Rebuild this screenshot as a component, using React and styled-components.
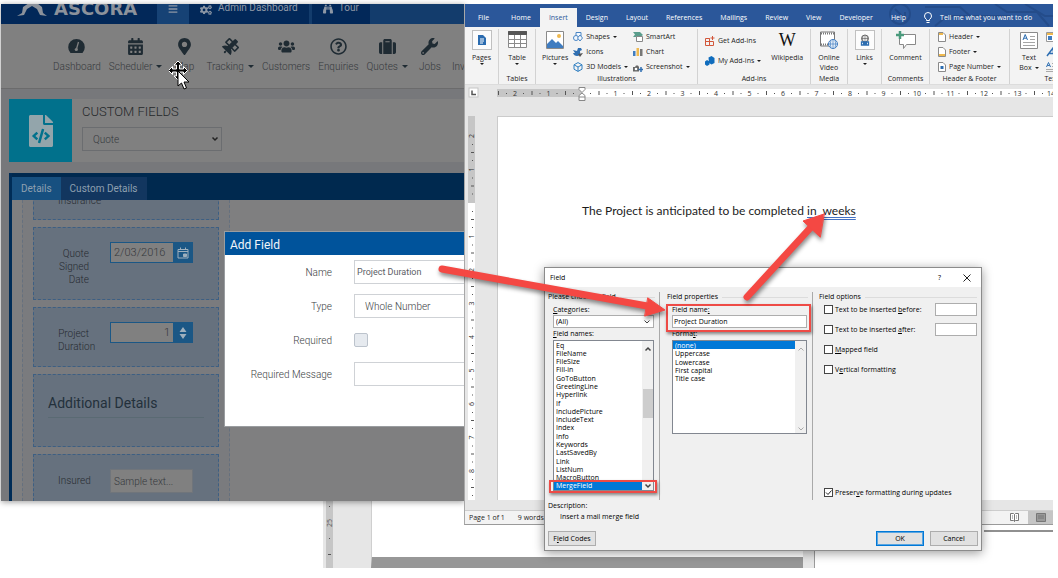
import React from "react";
import styled, { createGlobalStyle } from "styled-components";
import {
  FaCalendarAlt,
  FaMapMarkerAlt,
  FaSatellite,
  FaUsers,
  FaRegQuestionCircle,
  FaSuitcase,
  FaWrench,
  FaFileCode,
  FaCogs,
  FaBinoculars,
  FaBars,
} from "react-icons/fa";

const GlobalStyle = createGlobalStyle`
  * {
    box-sizing: border-box;
  }
  body {
    margin: 0;
    background: #fff;
  }
  button, input, select {
    font: inherit;
    color: inherit;
    margin: 0;
    padding: 0;
    border: none;
    border-radius: 0;
    background: none;
  }
  svg {
    display: block;
    flex: none;
  }
`;

const Desktop = styled.main`
  position: relative;
  min-height: 568px;
  overflow: hidden;
`;

const Caret = styled.span`
  width: 0;
  height: 0;
  border: ${(p) => p.$size || 2}px solid transparent;
  border-top-color: currentColor;
  border-bottom: none;
`;

/* ---------- Ascora window ---------- */

const AscoraWindow = styled.section`
  position: absolute;
  left: 1px;
  top: 4px;
  width: 464px;
  height: 497px;
  overflow: hidden;
  display: flex;
  flex-direction: column;
  background: #77787b;
  box-shadow: 0 1px 6px rgba(0, 0, 0, 0.4);
  font: 300 10px/13px Roboto, sans-serif;
  color: #36393d;
`;

const TopBar = styled.header`
  display: flex;
  height: 20px;
  flex: none;
  background: #133c6c;
  color: #8d97a5;
`;

const Brand = styled.div`
  display: flex;
  align-items: flex-end;
  gap: 6px;
  width: 156px;
  padding: 0 0 7px 15px;
  background: #022859;
  color: #8c929b;
  font: bold 18px/16px "DejaVu Sans", sans-serif;
`;

const TopTab = styled.button`
  display: flex;
  align-items: flex-start;
  gap: 6px;
  padding: 0 11px;
  margin-right: ${(p) => (p.$light ? 0 : 3)}px;
  background: ${(p) => (p.$light ? "#164275" : "#022859")};
  font-weight: 400;
  line-height: 8px;
`;

const NavBar = styled.nav`
  display: flex;
  height: 65px;
  flex: none;
  padding: 14px 0 0 48px;
  background: #808080;
  border-bottom: 1px solid #6b6b6c;
  overflow: hidden;
`;

const NavItem = styled.button`
  display: flex;
  flex-direction: column;
  align-items: center;
  gap: 5px;
  flex: none;
  min-width: 36px;
  height: 40px;
  padding: 0 4px;
  color: #1f2b33;
  span {
    display: flex;
    align-items: center;
    gap: 4px;
    color: #36393d;
  }
  i {
    color: #1f2b33;
  }
`;

const PageHead = styled.div`
  display: flex;
  flex: none;
  height: 63px;
  margin: 10px 0 11px 8px;
  background: #808080;
`;

const Tile = styled.div`
  display: flex;
  align-items: center;
  justify-content: center;
  width: 63px;
  background: #01718c;
  color: #93a5ab;
`;

const PageTitle = styled.div`
  padding: 5px 10px;
  h1 {
    margin: 0 0 7px;
    font: 300 13px/16px Roboto, sans-serif;
    color: #25282b;
  }
`;

const SelectBox = styled.div`
  position: relative;
  width: ${(p) => p.$width};
  select {
    appearance: none;
    display: block;
    width: 100%;
    height: ${(p) => p.$height}px;
    padding-left: ${(p) => p.$indent}px;
    border: 1px solid ${(p) => p.$border};
    background: ${(p) => p.$fill || "transparent"};
  }
  svg {
    position: absolute;
    right: 3px;
    top: 50%;
    transform: translateY(-50%);
    pointer-events: none;
  }
`;

const FieldPanel = styled.div`
  flex: 1;
  display: flex;
  flex-direction: column;
  min-height: 0;
  margin-left: 8px;
  border-left: 3px solid #002c56;
  background: #7f7f80;
`;

const PanelTabs = styled.div`
  display: flex;
  flex: none;
  padding-top: 4px;
  background: #00294f;
`;

const PanelTab = styled.button`
  height: 23px;
  padding: 0 9px;
  background: ${(p) => (p.$active ? "#175080" : "#12365f")};
  color: #8fa0b0;
  font-weight: 400;
`;

const FieldColumn = styled.div`
  flex: 1;
  min-height: 0;
  overflow: hidden;
  display: flex;
  flex-direction: column;
  justify-content: flex-end;
  gap: 7px;
  width: 208px;
  margin-left: 10px;
  padding: 0 10px;
  border: 1px dashed #65707e;
  border-width: 0 1px;
  background: #7a7b7e;
`;

const FieldCard = styled.div`
  display: flex;
  align-items: ${(p) => p.$align || "flex-start"};
  flex: none;
  height: ${(p) => p.$height}px;
  padding: ${(p) => p.$pad || "14px 14px 0 24px"};
  border: 1px dashed #3d5f83;
  border-bottom-width: ${(p) => (p.$open ? 0 : 1)}px;
  background: #66717e;
`;

const CardLabel = styled.label`
  width: 31px;
  margin-right: 21px;
  padding-top: 5px;
  text-align: right;
  color: #262b31;
`;

const Picker = styled.div`
  display: flex;
  height: 21px;
  width: 83px;
  border: 1px solid #1b5785;
  input {
    flex: 1;
    min-width: 0;
    padding: 0 3px;
    background: #808080;
    text-align: ${(p) => p.$align || "left"};
    font-size: 11px;
  }
  button {
    display: flex;
    align-items: center;
    justify-content: center;
    width: 19px;
    background: #1b5785;
  }
`;

const SampleInput = styled.input`
  width: 83px;
  height: 24px;
  padding-left: 3px;
  border: 1px solid #70757b;
  background: #808080;
  &::placeholder {
    color: #36393d;
    opacity: 1;
  }
`;

const CardHeading = styled.h2`
  flex: 1;
  margin: 0;
  padding-bottom: 4px;
  border-bottom: 1px solid #5a6a73;
  font: 400 14px/20px Roboto, sans-serif;
  color: #23303b;
`;

const FieldModal = styled.div`
  position: absolute;
  left: 223px;
  top: 227px;
  width: 260px;
  height: 196px;
  border: 1px solid #9a9da0;
  background: #fff;
  h2 {
    margin: 0;
    padding: 3px 5px 0;
    height: 23px;
    background: #00539b;
    color: #f1f5f9;
    font: 400 12px/20px Roboto, sans-serif;
  }
`;

const ModalRow = styled.div`
  display: grid;
  grid-template-columns: 107px 1fr;
  column-gap: 22px;
  align-items: center;
  height: 34px;
  color: #3a3e43;
  label {
    text-align: right;
  }
`;

const ModalInput = styled.input`
  height: 24px;
  padding-left: 2px;
  border: 1px solid #cfd2d6;
  color: #5c6066;
  font-size: 9px;
  font-weight: 400;
`;

const ModalCheck = styled.input`
  appearance: none;
  width: 14px;
  height: 14px;
  border: 1px solid #bcc3cc;
  border-radius: 2px;
  background: #e6eaef;
`;

const MoveCursor = styled.svg`
  position: absolute;
  left: 168px;
  top: 57px;
`;

/* ---------- document behind ---------- */

const BackWindow = styled.section`
  position: absolute;
  left: 323px;
  top: 490px;
  width: 492px;
  height: 78px;
  display: flex;
  padding-left: 3px;
  border-right: 1px solid #9b9b9b;
  background: #e6e6e6;
`;

const BackPage = styled.div`
  flex: 1;
  margin: 0 11px 0 38px;
  border-left: 1px solid #cfcfcf;
  border-bottom: 11px solid #979797;
  background: #fff;
`;

const BottomShade = styled.div`
  position: absolute;
  left: 984px;
  right: 5px;
  top: 522px;
  height: 10px;
  border-bottom: 2px solid #909090;
`;

/* ---------- Word window ---------- */

const WordWindow = styled.section`
  position: absolute;
  left: 464px;
  right: 5px;
  top: 4px;
  display: flex;
  flex-direction: column;
  overflow: hidden;
  border-left: 1px solid #a8a8a8;
  border-bottom: 1px solid #9a9a9a;
  background: #e6e6e6;
  font: 7px/10px "Open Sans", sans-serif;
  color: #1c1c1c;
`;

const WordTabs = styled.div`
  position: relative;
  display: flex;
  align-items: flex-end;
  height: 23px;
  padding-left: 4px;
  overflow: hidden;
  background: #2b579a;
  color: #fff;
`;

const WordTab = styled.button`
  position: relative;
  flex: none;
  height: 19px;
  padding: 0 9px;
  white-space: nowrap;
  background: ${(p) => (p.$active ? "#f3f3f3" : "transparent")};
  color: ${(p) => (p.$active ? "#2b579a" : "inherit")};
  &:first-of-type {
    margin-right: 4px;
  }
`;

const TellMe = styled(WordTab)`
  display: flex;
  align-items: center;
  gap: 8px;
`;

const Circuit = styled.svg`
  position: absolute;
  left: 420px;
  top: 0;
`;

const Ribbon = styled.div`
  display: flex;
  height: 58px;
  padding: 2px 0 0;
  overflow: hidden;
  background: #f3f3f3;
  border-bottom: 1px solid #dcdcdc;
`;

const Group = styled.div`
  display: flex;
  flex-direction: column;
  flex: none;
  width: ${(p) => p.$width}px;
  border-right: 1px solid #d2d2d2;
`;

const GroupBody = styled.div`
  display: flex;
  flex: 1;
  min-height: 0;
  justify-content: ${(p) => p.$justify || "center"};
  gap: ${(p) => p.$gap || 0}px;
  padding-left: ${(p) => p.$left || 0}px;
`;

const GroupLabel = styled.div`
  height: 10px;
  text-align: center;
  white-space: nowrap;
`;

const BigButton = styled.button`
  display: flex;
  flex-direction: column;
  align-items: center;
  flex: none;
  height: 44px;
  white-space: nowrap;
  line-height: 10px;
`;

const IconFrame = styled.span`
  display: flex;
  align-items: center;
  justify-content: center;
  width: 20px;
  height: 20px;
  margin: 1px 0 3px;
  border: 1px solid ${(p) => (p.$boxed ? "#c0c0c0" : "transparent")};
  background: ${(p) => (p.$boxed ? "#fcfcfc" : "transparent")};
`;

const WikiMark = styled.span`
  font: 18px/20px "Liberation Serif", serif;
  color: #111;
`;

const ButtonStack = styled.div`
  display: flex;
  flex-direction: column;
  flex: none;
  padding-top: ${(p) => p.$top || 0}px;
`;

const SmallButton = styled.button`
  display: flex;
  align-items: center;
  gap: 3px;
  height: ${(p) => p.$height || 15}px;
  white-space: nowrap;
`;

const RulerBar = styled.svg`
  width: 100%;
  height: 31px;
  font: 7px "Open Sans", sans-serif;
`;

const DocArea = styled.div`
  display: flex;
  height: 384px;
`;

const Page = styled.div`
  flex: 1;
  margin-left: 21px;
  padding: 84px 0 0 84px;
  border: 1px solid #cbcbcb;
  border-width: 1px 0 0 1px;
  background: #fff;
  font: 12px/20px Lato, sans-serif;
  color: #1c1c1c;
  white-space: pre;
  p {
    margin: 0;
  }
  u {
    text-decoration: underline double #4472c4;
    text-underline-offset: 2px;
  }
`;

const StatusBar = styled.footer`
  display: flex;
  align-items: center;
  gap: 13px;
  height: 14px;
  margin-top: 10px;
  padding-left: 4px;
  border-top: 1px solid #cdcdcd;
  background: #f3f3f3;
`;

const ViewIcons = styled.div`
  display: flex;
  align-items: center;
  gap: 9px;
  margin-left: auto;
  height: 100%;
  button {
    display: flex;
    align-items: center;
    justify-content: center;
    height: 100%;
  }
  button:last-child {
    width: 25px;
    background: #c5c5c5;
  }
`;

/* ---------- Field dialog ---------- */

const Dialog = styled.section`
  position: absolute;
  left: 544px;
  top: 267px;
  width: 438px;
  border: 1px solid #8b8b8b;
  background: #f0f0f0;
  box-shadow: 0 2px 10px rgba(0, 0, 0, 0.4);
  font: 7px/10px "Open Sans", sans-serif;
  color: #000;
`;

const DialogTitle = styled.div`
  display: flex;
  align-items: center;
  height: 19px;
  padding: 0 10px 0 5px;
  background: #fff;
  span {
    flex: 1;
  }
  button {
    margin-left: 22px;
  }
`;

const DialogBody = styled.div`
  display: grid;
  grid-template-columns: 115px 153px 1fr;
  padding-top: 5px;
`;

const Column = styled.fieldset`
  display: flex;
  flex-direction: column;
  min-width: 0;
  height: 208px;
  margin: 0;
  padding: 0 4px 0 ${(p) => p.$left}px;
  border: none;
  border-right: ${(p) => (p.$last ? "none" : "1px solid #a9a9a9")};
`;

const Caption = styled.div`
  display: flex;
  align-items: center;
  gap: 4px;
  height: 10px;
  margin-bottom: ${(p) => p.$gap || 3}px;
  white-space: nowrap;
  &::after {
    content: "";
    flex: 1;
    height: 1px;
    background: #dcdcdc;
  }
`;

const Indent = styled.div`
  display: flex;
  flex-direction: column;
  padding: 0 1px 0 5px;
  label, .label {
    height: 10px;
  }
  .label {
    margin: 1px 0;
  }
`;

const TextInput = styled.input`
  width: ${(p) => p.$width || "100%"};
  height: 13px;
  padding-left: 1px;
  border: 1px solid #adadad;
  background: #fff;
`;

const ListBox = styled.div`
  display: flex;
  height: ${(p) => p.$height}px;
  border: 1px solid #828790;
  background: #fff;
  ul {
    flex: 1;
    display: flex;
    flex-direction: column;
    height: ${(p) => p.$listHeight};
    margin: 0;
    padding: 0;
    list-style: none;
  }
  li {
    flex: 1;
    display: flex;
    align-items: center;
    padding-left: 2px;
    line-height: 9px;
    min-height: 0;
  }
  li[aria-selected="true"] {
    background: #0078d7;
    color: #fff;
  }
`;

const ScrollTrack = styled.div`
  display: flex;
  flex-direction: column;
  align-items: center;
  width: 11px;
  padding: 4px 0 0;
  background: #f0f0f0;
  &::before {
    content: "";
    order: 1;
    width: 10px;
    height: ${(p) => p.$thumb}px;
    margin-top: ${(p) => p.$offset}px;
    background: #cdcdcd;
  }
  svg:last-child {
    order: 2;
    margin-top: auto;
  }
`;

const Option = styled.div`
  display: flex;
  align-items: center;
  gap: 2px;
  height: 13px;
  margin-bottom: 7px;
  white-space: nowrap;
  label {
    flex: 1;
  }
  input[type="checkbox"] {
    appearance: none;
    width: 9px;
    height: 9px;
    border: 1px solid #444;
    background: #fff;
  }
`;

const OptionList = styled.div`
  flex: 1;
  display: flex;
  flex-direction: column;
  padding-left: 5px;
  ${Option}:last-child {
    margin-top: auto;
    margin-bottom: 1px;
  }
`;

const Tick = styled.span`
  position: relative;
  display: flex;
  svg {
    position: absolute;
    inset: 1px;
    pointer-events: none;
  }
`;

const Description = styled.div`
  padding: 1px 0 8px 3px;
  p {
    margin: 0;
    height: 11px;
  }
  p + p {
    padding-left: 12px;
  }
`;

const DialogFooter = styled.div`
  display: flex;
  gap: 6px;
  padding: 0 3px 4px;
  button {
    width: 48px;
    height: 15px;
    border: 1px solid #adadad;
    background: #e1e1e1;
  }
  button:first-child {
    margin-right: auto;
  }
`;

const OkButton = styled.button`
  && {
    border-color: #0078d7;
    box-shadow: inset 0 0 0 1px #5aa5e0;
  }
`;

/* ---------- annotations ---------- */

const Highlight = styled.div`
  position: absolute;
  left: ${(p) => p.$x}px;
  top: ${(p) => p.$y}px;
  width: ${(p) => p.$w}px;
  height: ${(p) => p.$h}px;
  border: 2px solid #ee4b46;
  box-shadow: 1px 2px 3px rgba(0, 0, 0, 0.45);
  pointer-events: none;
`;

const Arrows = styled.svg`
  position: absolute;
  left: 0;
  top: 0;
  pointer-events: none;
  filter: drop-shadow(1px 3px 2px rgba(0, 0, 0, 0.45));
`;

const GaugeIcon = () => (
  <svg width="17" height="17" viewBox="0 0 17 17">
    <path d="M2.500 15A8.300 8.300 0 1 1 14.500 15z" fill="#1f2b33" />
    <path d="M10.500 4 8.500 11" stroke="#808080" strokeWidth="1.300" />
    <circle cx="8.300" cy="11.500" r="1.600" fill="#808080" />
  </svg>
);

const navItems = [
  { label: "Dashboard", icon: GaugeIcon },
  { label: "Scheduler", icon: FaCalendarAlt, menu: true },
  { label: "Map", icon: FaMapMarkerAlt },
  { label: "Tracking", icon: FaSatellite, menu: true },
  { label: "Customers", icon: FaUsers },
  { label: "Enquiries", icon: FaRegQuestionCircle },
  { label: "Quotes", icon: FaSuitcase, menu: true },
  { label: "Jobs", icon: FaWrench },
  { label: "Invoices" },
];

const wordTabs = ["File", "Home", "Insert", "Design", "Layout", "References", "Mailings", "Review", "View", "Developer", "Help"];

const fieldNames = [
  "Eq", "FileName", "FileSize", "Fill-in", "GoToButton", "GreetingLine", "Hyperlink", "If", "IncludePicture",
  "IncludeText", "Index", "Info", "Keywords", "LastSavedBy", "Link", "ListNum", "MacroButton", "MergeField",
];

const formats = ["(none)", "Uppercase", "Lowercase", "First capital", "Title case"];

const Chevron = ({ up, size = 8, color = "#444", width = 1 }) => (
  <svg width={size} height={size} viewBox="0 0 8 8" fill="none" stroke={color} strokeWidth={width}>
    <path d={up ? "M1.5 5.5 4 3l2.5 2.5" : "M1.5 2.5 4 5l2.5-2.5"} />
  </svg>
);

const GearLogo = () => (
  <svg width="32" height="14" viewBox="0 0 32 14" fill="#8c929b">
    <path d="M1 13 6 10 7 4 13 0h8l5 4 1 6 4 3-7-1-3-6-5-3-5 3-3 6z" />
  </svg>
);

const AscoraApp = () => (
  <AscoraWindow>
    <TopBar>
      <Brand>
        <GearLogo />
        ASCORA
      </Brand>
      <TopTab $light aria-label="Menu">
        <FaBars size={10} />
      </TopTab>
      <TopTab>
        <FaCogs size={12} />
        Admin Dashboard
      </TopTab>
      <TopTab>
        <FaBinoculars size={10} />
        Tour
      </TopTab>
    </TopBar>
    <NavBar>
      {navItems.map(({ label, icon: Icon, menu }) => (
        <NavItem key={label}>
          {Icon ? <Icon size={17} /> : <svg width="17" height="17" />}
          <span>
            {label}
            {menu && <Caret as="i" $size={3} />}
          </span>
        </NavItem>
      ))}
    </NavBar>
    <PageHead>
      <Tile>
        <FaFileCode size={32} />
      </Tile>
      <PageTitle>
        <h1>CUSTOM FIELDS</h1>
        <SelectBox $width="140px" $height={24} $indent={10} $border="#6b6d70">
          <select aria-label="Record type">
            <option>Quote</option>
          </select>
          <Chevron width={1.5} color="#222" />
        </SelectBox>
      </PageTitle>
    </PageHead>
    <FieldPanel>
      <PanelTabs>
        <PanelTab $active>Details</PanelTab>
        <PanelTab>Custom Details</PanelTab>
      </PanelTabs>
      <FieldColumn>
        <FieldCard $height={60} $align="flex-end" $pad="0 14px 12px 24px">
          <CardLabel as="span">Insurance</CardLabel>
        </FieldCard>
        <FieldCard $height={73}>
          <CardLabel htmlFor="signed">Quote Signed Date</CardLabel>
          <Picker>
            <input id="signed" defaultValue="2/03/2016" />
            <button aria-label="Pick a date">
              <svg width="12" height="12" viewBox="0 0 12 12" fill="none" stroke="#9fb0bd">
                <path d="M1 2.500h10v8.500H1zM1 4.500h10M3.500.500v2M8.500.500v2" />
                <path d="M6.500 7h3v2.500h-3z" fill="#9fb0bd" />
              </svg>
            </button>
          </Picker>
        </FieldCard>
        <FieldCard $height={60}>
          <CardLabel htmlFor="duration">Project Duration</CardLabel>
          <Picker $align="right">
            <input id="duration" defaultValue="1" />
            <button aria-label="Change value">
              <svg width="8" height="12" viewBox="0 0 8 12" fill="#9fb0bd">
                <path d="M4 0l3.500 5h-7zM4 12 .5 7h7z" />
              </svg>
            </button>
          </Picker>
        </FieldCard>
        <FieldCard $height={73} $pad="18px 14px 0 14px">
          <CardHeading>Additional Details</CardHeading>
        </FieldCard>
        <FieldCard $height={47} $open>
          <CardLabel htmlFor="insured">Insured</CardLabel>
          <SampleInput id="insured" placeholder="Sample text..." />
        </FieldCard>
      </FieldColumn>
    </FieldPanel>
    <FieldModal role="dialog" aria-label="Add Field">
      <h2>Add Field</h2>
      <ModalRow>
        <label htmlFor="name">Name</label>
        <ModalInput id="name" defaultValue="Project Duration" />
      </ModalRow>
      <ModalRow>
        <label htmlFor="type">Type</label>
        <SelectBox $width="100%" $height={24} $indent={10} $border="#cfd2d6">
          <select id="type">
            <option>Whole Number</option>
          </select>
        </SelectBox>
      </ModalRow>
      <ModalRow>
        <label htmlFor="required">Required</label>
        <ModalCheck id="required" type="checkbox" />
      </ModalRow>
      <ModalRow>
        <label htmlFor="message">Required Message</label>
        <ModalInput id="message" />
      </ModalRow>
    </FieldModal>
    <MoveCursor width="24" height="30" viewBox="0 0 24 30" stroke="#fff" strokeWidth="1" fill="#000">
      <path d="M9 0l4 4h-2.500v4h4V5.500L18.500 9.500l-4 4V11h-4v4H13l-4 4-4-4h2.500v-4h-4v2.500L-.5 9.500l4-4V8h4V4H5z" />
      <path d="M9 10v15l3.500-3 2.500 6 2.500-1-2.500-6h5z" fill="#fff" stroke="#000" />
    </MoveCursor>
  </AscoraWindow>
);

const BackDocument = () => (
  <BackWindow>
    <svg width="7" height="78" fontFamily="Open Sans, sans-serif" fontSize="7" fill="#555">
      <rect width="7" height="78" fill="#c6c6c6" />
      <text transform="translate(6 33) rotate(-90)" textAnchor="middle">25</text>
      <rect x="3" y="16" width="1" height="1" />
      <rect x="3" y="48" width="1" height="1" />
      <rect x="2" y="64" width="3" height="1" />
    </svg>
    <BackPage />
  </BackWindow>
);

/* small ribbon drawings */
const DocIcon = () => (
  <svg width="10" height="12" viewBox="0 0 10 12">
    <path d="M1 1h5l3 3v7H1z" fill="#2b6cb0" />
    <path d="M3 5h4M3 7h4M3 9h3" stroke="#fff" />
  </svg>
);

const TableIcon = () => (
  <svg width="19" height="18" viewBox="0 0 19 18" fill="#fff" stroke="#8a8a8a">
    <path d="M.5.5h18v16H.5zM.5 8.500h18M.5 12.500h18M6.500 4v13M12.500 4v13" />
    <path d="M.5.5h18v3H.5z" fill="#555" stroke="#555" />
  </svg>
);

const PictureIcon = () => (
  <svg width="18" height="18" viewBox="0 0 18 18">
    <path d="M.5.5h17v17H.5z" fill="#fff" stroke="#8a8a8a" />
    <path d="M1 17v-4l5-5 4 4 2-2 5 5v2z" fill="#3f7cc0" />
    <circle cx="13" cy="5" r="2" fill="#efb94f" />
  </svg>
);

const VideoIcon = () => (
  <svg width="18" height="18" viewBox="0 0 18 18" fill="none">
    <path d="M.5 1h14v14H.5z" fill="#fff" stroke="#777" />
    <path d="M1 2.500h14M1 13.500h7" stroke="#777" strokeWidth="2" strokeDasharray="1 1" />
    <circle cx="13" cy="13" r="4.500" fill="#eef4fb" stroke="#3f7cc0" />
    <path d="M8.500 13h9M13 8.500v9M11 9.500q-1.500 3.500 0 7M15 9.500q1.500 3.500 0 7" stroke="#3f7cc0" strokeWidth=".7" />
  </svg>
);

const LinkIcon = () => (
  <svg width="12" height="13" viewBox="0 0 12 13" fill="none" stroke="#666">
    <circle cx="6" cy="4.500" r="3.500" />
    <path d="M2.500 4.500h7M6 1v7M4 2q-1 3 0 5M8 2q1 3 0 5" strokeWidth=".7" />
    <path d="M2.500 8h3v3h-3zM6.500 8h3v3h-3zM4 9.500h4" stroke="#2b6cb0" strokeWidth="1.300" />
  </svg>
);

const CommentIcon = () => (
  <svg width="20" height="18" viewBox="0 0 20 18">
    <path d="M3.500 3.500h16v10h-9l-3 4v-4h-4z" fill="#fff" stroke="#888" />
    <path d="M4 0v8M0 4h8" stroke="#4a9a7c" strokeWidth="2.500" />
  </svg>
);

const TextBoxIcon = () => (
  <svg width="18" height="17" viewBox="0 0 18 17">
    <path d="M.5.5h17v16H.5z" fill="#fff" stroke="#8a8a8a" />
    <path d="M10 4.500h5M10 7.500h5M3 10.500h12M3 13.500h12" stroke="#a5a5a5" />
    <path d="M3 8l2.200-5.500L7.500 8M3.800 6.200h3" fill="none" stroke="#2b6cb0" />
  </svg>
);

const ShapesIcon = () => (
  <svg width="10" height="10" viewBox="0 0 10 10" fill="#f3f8fd" stroke="#4a86c5">
    <path d="M3 .5h5v4H3z" />
    <circle cx="3" cy="6" r="2.500" />
    <path d="M7 3l2.500 3L7 9 4.500 6z" />
  </svg>
);

const BirdIcon = () => (
  <svg width="10" height="10" viewBox="0 0 10 10" fill="#2f6fb2">
    <path d="M0 3l4 1 1-3 3 0 1 2-2 1q1 5-3 5-3 0-4-3l2 0z" />
    <path d="M5 7l5-1-3 4z" fill="#555" />
  </svg>
);

const CubeIcon = () => (
  <svg width="10" height="10" viewBox="0 0 10 10" fill="none" stroke="#2f7fc2">
    <path d="M5 .6 9 2.800v4.400L5 9.400 1 7.200V2.800zM1 2.800 5 5l4-2.200M5 5v4.400" />
  </svg>
);

const SmartArtIcon = () => (
  <svg width="10" height="10" viewBox="0 0 10 10">
    <path d="M0 0h7l3 3-3 2H0l2-2.500z" fill="#5a9d8c" />
    <path d="M3.500 4.500h6v5h-6z" fill="#fff" stroke="#888" />
  </svg>
);

const ChartIcon = () => (
  <svg width="10" height="10" viewBox="0 0 10 10">
    <path d="M0 4h2.500v5H0z" fill="#3f7cc0" />
    <path d="M3.500 1h2.500v8H3.500z" fill="#efb94f" />
    <path d="M7 2h2.500v7H7z" fill="#777" />
  </svg>
);

const ShotIcon = () => (
  <svg width="10" height="10" viewBox="0 0 10 10">
    <path d="M0 5h2l1-1.500h2L6 5v4.500H0z" fill="#666" />
    <circle cx="3" cy="7" r="1.300" fill="#fff" />
    <path d="M8 5v5M5.500 7.500h5" stroke="#2f6fb2" strokeWidth="1.500" />
  </svg>
);

const GridIcon = () => (
  <svg width="10" height="10" viewBox="0 0 10 10" fill="none" stroke="#d2573a">
    <path d="M.5 2.500h4v7h-4zM.5 5.500h8v4h-4v-7M7.500 0v4M5.500 2h4" />
  </svg>
);

const AddInIcon = () => (
  <svg width="10" height="10" viewBox="0 0 10 10" fill="#0f6cbd">
    <path d="M3.500 1.500 6.500 0l3 2v5L6.500 8.500 4 7z" />
    <path d="M0 5.500 2 4l2.500 1.500v3L2 10 0 8.500z" />
  </svg>
);

const SheetIcon = ({ mark }) => (
  <svg width="8" height="10" viewBox="0 0 8 10">
    <path d="M.5.5h4.500L7.500 3v6.500h-7z" fill="#fff" stroke="#8a8a8a" />
    <path d={mark.d} fill={mark.fill} />
  </svg>
);

const PictureMini = () => (
  <svg width="10" height="10" viewBox="0 0 10 10">
    <path d="M.5.5h9v9h-9z" fill="#fff" stroke="#999" />
    <path d="M2 4h4v4H2z" fill="#3f7cc0" />
    <path d="M1 1h8v2H1z" fill="#efb94f" />
  </svg>
);

const WordArtIcon = () => (
  <svg width="10" height="10" viewBox="0 0 10 10" fill="none" stroke="#2f6fb2" strokeWidth="1.500">
    <path d="M1 9 7 1l1 8M3.500 6.500h4" />
  </svg>
);

const DropCapIcon = () => (
  <svg width="10" height="10" viewBox="0 0 10 10" fill="none">
    <path d="M.5 5 2.500.5l2 4.500M1.300 3.500h2.400" stroke="#2f6fb2" />
    <path d="M6 1.500h4M6 4.500h4M0 7.500h10M0 9.500h10" stroke="#aaa" />
  </svg>
);

const Bulb = () => (
  <svg width="8" height="12" viewBox="0 0 8 12" fill="none" stroke="#fff">
    <path d="M2.500 8.500V7.500Q.5 6 .5 4a3.500 3.500 0 0 1 7 0q0 2-2 3.500v1zM2.500 10.500h3" />
  </svg>
);

const Ruler = () => {
  const cm = 33.5;
  const zero = 117;
  const units = Array.from({ length: 40 }, (_, i) => i - 2);
  return (
    <RulerBar>
      <rect x="4" y="3" width="9" height="9" fill="#fff" stroke="#c5c5c5" />
      <path d="M7 5.500v4h4" stroke="#555" fill="none" strokeWidth="1.500" />
      <rect x="32" y="4" width="100%" height="8" fill="#fff" />
      <rect x="32" y="4" width="85" height="8" fill="#c6c6c6" />
      {units.map((n) => {
        const x = zero + n * cm;
        return (
          <g key={n} fill="#555">
            {n !== 0 && (
              <text x={x} y="11" textAnchor="middle" fill="#333">
                {Math.abs(n)}
              </text>
            )}
            <rect x={x + 8} y="8" width="1" height="1" />
            <rect x={x - 17} y="6" width="1" height="4" />
            <rect x={x - 9} y="8" width="1" height="1" />
          </g>
        );
      })}
      <path d="M114 2.500h6v2l-3 3-3-3zM117 8l3 2.500v5h-6v-5zM114 12h6" fill="#fff" stroke="#888" />
    </RulerBar>
  );
};

const SideRuler = () => {
  const cm = 33.5;
  const units = [-2, -1, 0, 1, 2, 3, 4, 5, 6, 7, 8];
  return (
    <svg width="11" height="384" fontFamily="Open Sans, sans-serif" fontSize="7">
      <rect x="3" width="7" height="384" fill="#fff" />
      <rect x="3" width="7" height="87" fill="#c6c6c6" />
      {units.map((n) => {
        const y = 87 + n * cm;
        return (
          <g key={n} fill="#555">
            {n !== 0 && (
              <text transform={`translate(9 ${y}) rotate(-90)`} textAnchor="middle" fill="#333">
                {Math.abs(n)}
              </text>
            )}
            <rect x="7" y={y + 8} width="1" height="1" />
            <rect x="6" y={y + 16} width="3" height="1" />
            <rect x="7" y={y + 24} width="1" height="1" />
          </g>
        );
      })}
    </svg>
  );
};

const WordRibbon = () => (
  <Ribbon>
    <Group $width={34}>
      <GroupBody>
        <BigButton>
          <IconFrame $boxed><DocIcon /></IconFrame>
          Pages
          <Caret />
        </BigButton>
      </GroupBody>
    </Group>
    <Group $width={37}>
      <GroupBody>
        <BigButton>
          <IconFrame><TableIcon /></IconFrame>
          Table
          <Caret />
        </BigButton>
      </GroupBody>
      <GroupLabel>Tables</GroupLabel>
    </Group>
    <Group $width={162}>
      <GroupBody $justify="flex-start" $left={6} $gap={5}>
        <BigButton>
          <IconFrame><PictureIcon /></IconFrame>
          Pictures
          <Caret />
        </BigButton>
        <ButtonStack>
          <SmallButton><ShapesIcon />Shapes<Caret /></SmallButton>
          <SmallButton><BirdIcon />Icons</SmallButton>
          <SmallButton><CubeIcon />3D Models <Caret /></SmallButton>
        </ButtonStack>
        <ButtonStack>
          <SmallButton><SmartArtIcon />SmartArt</SmallButton>
          <SmallButton><ChartIcon />Chart</SmallButton>
          <SmallButton><ShotIcon />Screenshot<Caret /></SmallButton>
        </ButtonStack>
      </GroupBody>
      <GroupLabel>Illustrations</GroupLabel>
    </Group>
    <Group $width={113}>
      <GroupBody $justify="flex-start" $left={7} $gap={10}>
        <ButtonStack $top={2}>
          <SmallButton $height={20}><GridIcon />Get Add-ins</SmallButton>
          <SmallButton $height={20}><AddInIcon />My Add-ins <Caret /></SmallButton>
        </ButtonStack>
        <BigButton>
          <IconFrame>
            <WikiMark>W</WikiMark>
          </IconFrame>
          Wikipedia
        </BigButton>
      </GroupBody>
      <GroupLabel>Add-ins</GroupLabel>
    </Group>
    <Group $width={37}>
      <GroupBody>
        <BigButton>
          <IconFrame><VideoIcon /></IconFrame>
          <span>Online</span>
          <span>Video</span>
        </BigButton>
      </GroupBody>
      <GroupLabel>Media</GroupLabel>
    </Group>
    <Group $width={34}>
      <GroupBody>
        <BigButton>
          <IconFrame $boxed><LinkIcon /></IconFrame>
          Links
          <Caret />
        </BigButton>
      </GroupBody>
    </Group>
    <Group $width={48}>
      <GroupBody>
        <BigButton>
          <IconFrame><CommentIcon /></IconFrame>
          Comment
        </BigButton>
      </GroupBody>
      <GroupLabel>Comments</GroupLabel>
    </Group>
    <Group $width={80}>
      <GroupBody $justify="flex-start" $left={8}>
        <ButtonStack>
          <SmallButton><SheetIcon mark={{ d: "M1 1h4v2H1z", fill: "#efb94f" }} />Header<Caret /></SmallButton>
          <SmallButton><SheetIcon mark={{ d: "M1 7h6v2H1z", fill: "#efb94f" }} />Footer<Caret /></SmallButton>
          <SmallButton><SheetIcon mark={{ d: "M2.500 4h3v3h-3z", fill: "#2b6cb0" }} />Page Number<Caret /></SmallButton>
        </ButtonStack>
      </GroupBody>
      <GroupLabel>Header &amp; Footer</GroupLabel>
    </Group>
    <Group $width={84}>
      <GroupBody $justify="flex-start" $left={9} $gap={7}>
        <BigButton>
          <IconFrame><TextBoxIcon /></IconFrame>
          Text
          <SmallButton as="span" $height={10}>Box<Caret /></SmallButton>
        </BigButton>
        <ButtonStack>
          <SmallButton aria-label="Quick parts"><PictureMini /></SmallButton>
          <SmallButton aria-label="WordArt"><WordArtIcon /></SmallButton>
          <SmallButton aria-label="Drop cap"><DropCapIcon /></SmallButton>
        </ButtonStack>
      </GroupBody>
      <GroupLabel>Text</GroupLabel>
    </Group>
  </Ribbon>
);

const WordApp = () => (
  <WordWindow>
    <WordTabs>
      <Circuit width="180" height="23" viewBox="0 0 180 23" fill="none" stroke="#244c8a" strokeWidth="2">
        <circle cx="15" cy="10" r="10" />
        <path d="M10 5l10 10M20 8v7h-7" />
        <path d="M40 3h35l10 9h40M50 22l12-10h20M110 0l12 8h30l12 14M140 0l20 12h20" />
      </Circuit>
      {wordTabs.map((tab) => (
        <WordTab key={tab} $active={tab === "Insert"}>
          {tab}
        </WordTab>
      ))}
      <TellMe>
        <Bulb />
        Tell me what you want to do
      </TellMe>
    </WordTabs>
    <WordRibbon />
    <Ruler />
    <DocArea>
      <SideRuler />
      <Page>
        <p>
          The Project is anticipated to be completed <u>in  weeks</u>
        </p>
      </Page>
    </DocArea>
    <StatusBar>
      <span>Page 1 of 1</span>
      <span>9 words</span>
      <ViewIcons>
        <button aria-label="Read mode">
          <svg width="9" height="9" viewBox="0 0 9 9" fill="#fff" stroke="#777">
            <path d="M.5.5h3l1 1 1-1h3v7h-3l-1 1-1-1h-3zM4.500 1.500v7M2 3h1M2 5h1M6 3h1M6 5h1" />
          </svg>
        </button>
        <button aria-label="Print layout">
          <svg width="10" height="9" viewBox="0 0 10 9" fill="#999" stroke="#777">
            <path d="M.5.5h9v8h-9zM2 3h6M2 5h6" />
          </svg>
        </button>
      </ViewIcons>
    </StatusBar>
  </WordWindow>
);

const FieldDialog = () => (
  <Dialog role="dialog" aria-label="Field">
    <DialogTitle>
      <span>Field</span>
      <button aria-label="Help">?</button>
      <button aria-label="Close">
        <svg width="8" height="8" viewBox="0 0 8 8" stroke="#222">
          <path d="M.5.500l7 7M7.500.500l-7 7" />
        </svg>
      </button>
    </DialogTitle>
    <DialogBody>
      <Column $left={3}>
        <Caption>Please choose a field</Caption>
        <Indent>
          <label htmlFor="categories"><u>C</u>ategories:</label>
          <SelectBox $width="100%" $height={13} $indent={2} $border="#adadad" $fill="#fff">
            <select id="categories">
              <option>(All)</option>
            </select>
            <Chevron />
          </SelectBox>
          <span className="label" id="names-label"><u>F</u>ield names:</span>
          <ListBox $height={151} $listHeight="149px">
            <ul role="listbox" aria-labelledby="names-label">
              {fieldNames.map((name) => (
                <li key={name} role="option" aria-selected={name === "MergeField"}>
                  {name}
                </li>
              ))}
            </ul>
            <ScrollTrack $thumb={29} $offset={36}>
              <Chevron up width={1.5} />
              <Chevron width={1.5} />
            </ScrollTrack>
          </ListBox>
        </Indent>
      </Column>
      <Column $left={7}>
        <Caption>Field properties</Caption>
        <Indent>
          <label htmlFor="field-name">Field name<u>:</u></label>
          <TextInput id="field-name" defaultValue="Project Duration" />
          <span className="label" id="format-label">Forma<u>t</u>:</span>
          <ListBox $height={94} $listHeight="42px">
            <ul role="listbox" aria-labelledby="format-label">
              {formats.map((name) => (
                <li key={name} role="option" aria-selected={name === "(none)"}>
                  {name}
                </li>
              ))}
            </ul>
            <ScrollTrack $thumb={0} $offset={0}>
              <Chevron up color="#aaa" />
              <Chevron color="#aaa" />
            </ScrollTrack>
          </ListBox>
        </Indent>
      </Column>
      <Column $left={6} $last>
        <Caption $gap={1}>Field options</Caption>
        <OptionList>
          <Option>
            <input type="checkbox" id="before" />
            <label htmlFor="before">Text to be inserted <u>b</u>efore:</label>
            <TextInput $width="42px" aria-label="Text before" />
          </Option>
          <Option>
            <input type="checkbox" id="after" />
            <label htmlFor="after">Text to be inserted <u>a</u>fter:</label>
            <TextInput $width="42px" aria-label="Text after" />
          </Option>
          <Option>
            <input type="checkbox" id="mapped" />
            <label htmlFor="mapped"><u>M</u>apped field</label>
          </Option>
          <Option>
            <input type="checkbox" id="vertical" />
            <label htmlFor="vertical">V<u>e</u>rtical formatting</label>
          </Option>
          <Option>
            <Tick>
              <input type="checkbox" id="preserve" defaultChecked />
              <svg width="7" height="7" viewBox="0 0 7 7" fill="none" stroke="#222">
                <path d="M1 3.500l2 2 3.500-4" />
              </svg>
            </Tick>
            <label htmlFor="preserve">Preser<u>v</u>e formatting during updates</label>
          </Option>
        </OptionList>
      </Column>
    </DialogBody>
    <Description>
      <p>Description:</p>
      <p>Insert a mail merge field</p>
    </Description>
    <DialogFooter>
      <button>F<u>i</u>eld Codes</button>
      <OkButton>OK</OkButton>
      <button>Cancel</button>
    </DialogFooter>
  </Dialog>
);

const App = () => (
  <>
    <GlobalStyle />
    <Desktop>
      <BackDocument />
      <AscoraApp />
      <BottomShade />
      <WordApp />
      <FieldDialog />
      <Highlight $x={666} $y={304} $w={145} $h={28} />
      <Highlight $x={549} $y={480} $w={108} $h={13} />
      <Arrows width="900" height="400" viewBox="0 0 900 400" fill="#f44843" stroke="#f44843" strokeWidth="7" strokeLinecap="round">
        <path d="M442 269 650 306.500" />
        <path d="M648 298l17 12-20 6z" strokeWidth="1" />
        <path d="M747 297 813 225" />
        <path d="M824 214l-21 7 17 16z" strokeWidth="1" />
      </Arrows>
    </Desktop>
  </>
);

export default App;
